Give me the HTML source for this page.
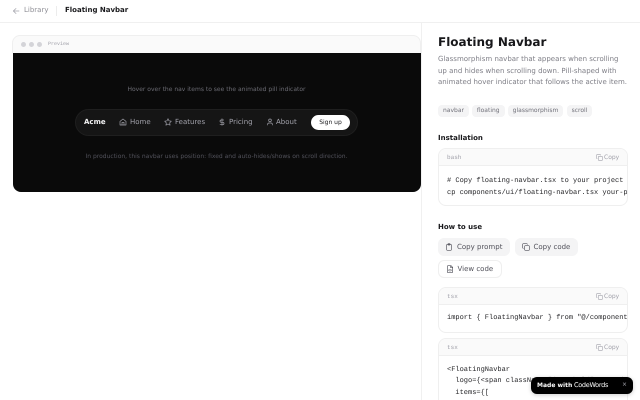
<!DOCTYPE html>
<html><head><meta charset="utf-8"><style>
html,body{margin:0;padding:0;background:#fff;width:640px;height:400px;overflow:hidden}
body{position:relative;font-family:"DejaVu Sans",sans-serif;text-rendering:geometricPrecision}
.a{position:absolute;white-space:nowrap;line-height:1}
.m{font-family:"Liberation Mono",monospace}
svg{position:absolute;fill:none;stroke:currentColor;stroke-linecap:round;stroke-linejoin:round}
.box{position:absolute;box-sizing:border-box;background:#fff;border:1px solid #efefef;border-radius:8px;overflow:hidden}
.hd{position:absolute;left:0;right:0;top:0;background:#fafafa;border-bottom:1px solid #efefef;box-sizing:border-box}
.tag{position:absolute;top:104.5px;height:12.5px;background:#f4f4f5;border-radius:4px;font-size:6px;line-height:12.5px;color:#71717a;text-align:center}
.btn{position:absolute;box-sizing:border-box;border-radius:6px;height:18px}
</style></head><body>
<div class="a" style="left:0;top:22px;width:640px;height:1px;background:#f0f0f0"></div>
<div class="a" style="left:421px;top:23px;width:1px;height:377px;background:#f0f0f0"></div>
<svg style="left:12px;top:7px;color:#a1a1aa" width="8" height="8" viewBox="0 0 8 8" stroke-width=".7"><path d="M7 4H1.3M4 1.5L1.3 4 4 6.5"/></svg>
<div class="a" style="left:24px;top:7px;font-size:7px;color:#8f8f96">Library</div>
<div class="a" style="left:56px;top:6px;width:1px;height:10px;background:#ececec"></div>
<div class="a" style="left:65px;top:6.5px;font-size:7px;font-weight:700;color:#18181b">Floating Navbar</div>

<div class="a" style="left:12px;top:35px;width:409px;height:18px;box-sizing:border-box;background:#fafafa;border:1px solid #efefef;border-bottom:0;border-radius:8px 8px 0 0"></div>
<div class="a" style="left:12.500px;top:53px;width:408.500px;height:139px;background:#0a0a0a;border-radius:0 0 8px 8px"></div>
<div class="a" style="left:21px;top:41.500px;width:5px;height:5px;border-radius:50%;background:#d4d4d8"></div>
<div class="a" style="left:29px;top:41.500px;width:5px;height:5px;border-radius:50%;background:#d4d4d8"></div>
<div class="a" style="left:37px;top:41.500px;width:5px;height:5px;border-radius:50%;background:#d4d4d8"></div>
<div class="a m" style="left:48px;top:42px;font-size:5px;color:#a1a1aa">Preview</div>
<div class="a" style="left:12px;width:409px;top:87px;text-align:center;font-size:6px;color:#6b6b73">Hover over the nav items to see the animated pill indicator</div>
<div class="a" style="left:75px;top:109px;width:283px;height:27px;box-sizing:border-box;border:1px solid #1f1f1f;border-radius:14px;background:#151515"></div>
<div class="a" style="left:84px;top:119px;font-size:7px;font-weight:700;color:#f4f4f5">Acme</div>
<svg style="left:119px;top:118px;color:#a1a1aa" width="8" height="8" viewBox="0 0 24 24" stroke-width="2"><path d="M3 10l9-7 9 7v11H3zM9 21v-8h6v8"/></svg>
<div class="a" style="left:130px;top:119px;font-size:7px;color:#a1a1aa">Home</div>
<svg style="left:164px;top:118px;color:#a1a1aa" width="8" height="8" viewBox="0 0 24 24" stroke-width="2"><path d="M12 2l3 6.5 7 1-5 5 1.2 7L12 18l-6.200 3.500L7 14.500l-5-5 7-1z"/></svg>
<div class="a" style="left:175px;top:119px;font-size:7px;color:#a1a1aa">Features</div>
<svg style="left:218px;top:118px;color:#a1a1aa" width="8" height="8" viewBox="0 0 24 24" stroke-width="2"><path d="M12 2v20M17 6H9.500a3.500 3.500 0 000 7h5a3.500 3.500 0 010 7H6"/></svg>
<div class="a" style="left:229px;top:119px;font-size:7px;color:#a1a1aa">Pricing</div>
<svg style="left:266px;top:118px;color:#a1a1aa" width="8" height="8" viewBox="0 0 24 24" stroke-width="2"><path d="M19 21v-2a4 4 0 00-4-4H9a4 4 0 00-4 4v2"/><circle cx="12" cy="7" r="4"/></svg>
<div class="a" style="left:276px;top:119px;font-size:7px;color:#a1a1aa">About</div>
<div class="a" style="left:311px;top:115px;width:39px;height:15px;border-radius:8px;background:#fff;color:#18181b;font-size:6px;line-height:15px;text-align:center">Sign up</div>
<div class="a" style="left:12px;width:409px;top:154px;text-align:center;font-size:6px;color:#52525b">In production, this navbar uses position: fixed and auto-hides/shows on scroll direction.</div>

<div class="a" style="left:438px;top:36px;font-size:12px;font-weight:700;color:#18181b">Floating Navbar</div>
<div class="a" style="left:438px;top:54px;font-size:7px;line-height:11.700px;color:#7f7f87">Glassmorphism navbar that appears when scrolling<br>up and hides when scrolling down. Pill-shaped with<br>animated hover indicator that follows the active item.</div>
<div class="tag" style="left:438px;width:31px">navbar</div>
<div class="tag" style="left:472px;width:32.500px">floating</div>
<div class="tag" style="left:508px;width:55px">glassmorphism</div>
<div class="tag" style="left:567px;width:25px">scroll</div>
<div class="a" style="left:438px;top:134.500px;font-size:7px;font-weight:700;color:#18181b">Installation</div>

<div class="box" style="left:438px;top:148px;width:190px;height:58px"><div class="hd" style="height:17px"></div>
<div class="a m" style="left:8px;top:6px;font-size:6px;color:#a1a1aa">bash</div>
<div class="a" style="left:165px;top:5.500px;font-size:6px;color:#a1a1aa">Copy</div>
<svg style="left:157px;top:5px;color:#a1a1aa" width="7" height="7" viewBox="0 0 24 24" stroke-width="2"><rect x="8" y="8" width="14" height="14" rx="2"/><path d="M4 16a2 2 0 01-2-2V4a2 2 0 012-2h10a2 2 0 012 2"/></svg>
<div class="a m" style="left:8px;top:26px;font-size:7px;line-height:12px;color:#27272a;white-space:pre"># Copy floating-navbar.tsx to your project
cp components/ui/floating-navbar.tsx your-project/components/ui/</div></div>

<div class="a" style="left:438px;top:223.500px;font-size:7px;font-weight:700;color:#18181b">How to use</div>
<div class="btn" style="left:438px;top:238px;width:72px;background:#f4f4f5"></div>
<svg style="left:445px;top:243px;color:#52525b" width="8" height="8" viewBox="0 0 24 24" stroke-width="2"><rect x="5" y="4" width="14" height="18" rx="2"/><rect x="9" y="2" width="6" height="4" rx="1"/></svg>
<div class="a" style="left:457px;top:244px;font-size:7px;color:#52525b">Copy prompt</div>
<div class="btn" style="left:515px;top:238px;width:63px;background:#f4f4f5"></div>
<svg style="left:522px;top:243px;color:#52525b" width="8" height="8" viewBox="0 0 24 24" stroke-width="2"><rect x="8" y="8" width="14" height="14" rx="2"/><path d="M4 16a2 2 0 01-2-2V4a2 2 0 012-2h10a2 2 0 012 2"/></svg>
<div class="a" style="left:533.500px;top:244px;font-size:7px;color:#52525b">Copy code</div>
<div class="btn" style="left:438px;top:260px;width:64px;border:1px solid #efefef;background:#fff"></div>
<svg style="left:446px;top:265px;color:#52525b" width="8" height="8" viewBox="0 0 24 24" stroke-width="2"><path d="M6 2h9l5 5v15H4V4a2 2 0 012-2zM14 2v6h6M10 13l-2 2.500 2 2.500M14 13l2 2.500-2 2.500"/></svg>
<div class="a" style="left:457.500px;top:266px;font-size:7px;color:#52525b">View code</div>

<div class="box" style="left:438px;top:287px;width:190px;height:46px"><div class="hd" style="height:17px"></div>
<div class="a m" style="left:8px;top:6px;font-size:6px;color:#a1a1aa">tsx</div>
<div class="a" style="left:165px;top:5.500px;font-size:6px;color:#a1a1aa">Copy</div>
<svg style="left:157px;top:5px;color:#a1a1aa" width="7" height="7" viewBox="0 0 24 24" stroke-width="2"><rect x="8" y="8" width="14" height="14" rx="2"/><path d="M4 16a2 2 0 01-2-2V4a2 2 0 012-2h10a2 2 0 012 2"/></svg>
<div class="a m" style="left:8px;top:27px;font-size:7px;color:#27272a">import { FloatingNavbar } from "@/components/ui/floating-navbar"</div></div>

<div class="box" style="left:438px;top:338px;width:190px;height:80px"><div class="hd" style="height:17px"></div>
<div class="a m" style="left:8px;top:6px;font-size:6px;color:#a1a1aa">tsx</div>
<div class="a" style="left:165px;top:5.500px;font-size:6px;color:#a1a1aa">Copy</div>
<svg style="left:157px;top:5px;color:#a1a1aa" width="7" height="7" viewBox="0 0 24 24" stroke-width="2"><rect x="8" y="8" width="14" height="14" rx="2"/><path d="M4 16a2 2 0 01-2-2V4a2 2 0 012-2h10a2 2 0 012 2"/></svg>
<div class="a m" style="left:8px;top:25.700px;font-size:7px;line-height:11.700px;color:#27272a;white-space:pre">&lt;FloatingNavbar
  logo={&lt;span className="font-bold"&gt;Acme&lt;/span&gt;}
  items={[</div></div>

<div class="a" style="left:531px;top:377px;width:102px;height:17px;background:#000;border-radius:6px;box-shadow:0 1px 4px rgba(0,0,0,.2)"></div>
<div class="a" style="left:537px;top:382.500px;font-size:6px;font-weight:700;color:#fff">Made with</div>
<div class="a" style="left:574px;top:382px;font-size:6.500px;color:#fff;letter-spacing:-.3px">CodeWords</div>
<div class="a" style="left:622px;top:382px;font-size:6px;color:#a1a1aa">×</div>
</body></html>
